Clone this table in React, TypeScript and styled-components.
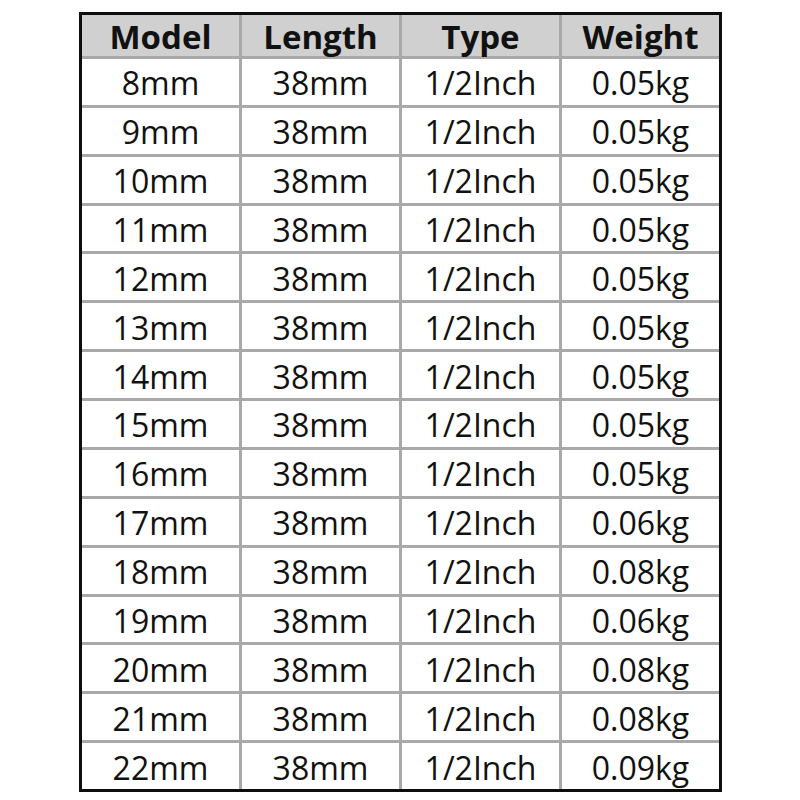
import React from "react";
import styled, { createGlobalStyle } from "styled-components";

const GlobalStyle = createGlobalStyle`
  html, body {
    margin: 0;
    padding: 0;
    background: #ffffff;
  }
  body {
    font-family: "Open Sans", "Noto Sans", "Liberation Sans", sans-serif;
    color: #111111;
  }
`;

const Page = styled.div`
  width: 800px;
  height: 800px;
  padding: 12px 0 0 79px;
  box-sizing: border-box;
`;

const SpecGrid = styled.div`
  width: 643px;
  height: 780px;
  box-sizing: border-box;
  border: 3px solid #0d0d0d;
  background: #a9a9a9;
  display: grid;
  grid-template-columns: repeat(4, 1fr);
  grid-template-rows: 41px repeat(15, 1fr);
  gap: 3px;
`;

const Cell = styled.div<{ $head?: boolean }>`
  display: flex;
  align-items: center;
  justify-content: center;
  background: ${(p) => (p.$head ? "#d0d0d0" : "#ffffff")};
  font-size: ${(p) => (p.$head ? "33px" : "32px")};
  font-weight: ${(p) => (p.$head ? 700 : 400)};
  line-height: 1;
  padding-top: ${(p) => (p.$head ? "1px" : "3px")};
  box-sizing: border-box;
  white-space: nowrap;
`;

const headers = ["Model", "Length", "Type", "Weight"];

const weights = [
  "0.05kg",
  "0.05kg",
  "0.05kg",
  "0.05kg",
  "0.05kg",
  "0.05kg",
  "0.05kg",
  "0.05kg",
  "0.05kg",
  "0.06kg",
  "0.08kg",
  "0.06kg",
  "0.08kg",
  "0.08kg",
  "0.09kg",
];

const rows = weights.map((w, i) => ({
  model: `${i + 8}mm`,
  length: "38mm",
  type: "1/2Inch",
  weight: w,
}));

const App: React.FC = () => {
  return (
    <Page>
      <GlobalStyle />
      <SpecGrid>
        {headers.map((h) => (
          <Cell $head key={h}>
            {h}
          </Cell>
        ))}
        {rows.map((r) => (
          <React.Fragment key={r.model}>
            <Cell>{r.model}</Cell>
            <Cell>{r.length}</Cell>
            <Cell>{r.type}</Cell>
            <Cell>{r.weight}</Cell>
          </React.Fragment>
        ))}
      </SpecGrid>
    </Page>
  );
};

export default App;
